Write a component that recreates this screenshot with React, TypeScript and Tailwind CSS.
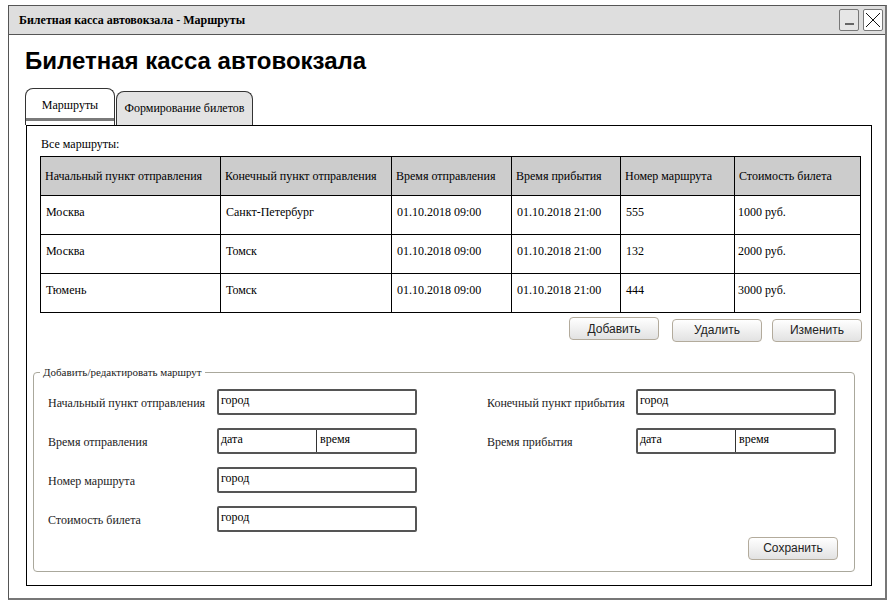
import React from "react";

type Route = { from: string; to: string; dep: string; arr: string; num: string; price: string };

const routes: Route[] = [
  { from: "Москва", to: "Санкт-Петербург", dep: "01.10.2018 09:00", arr: "01.10.2018 21:00", num: "555", price: "1000 руб." },
  { from: "Москва", to: "Томск", dep: "01.10.2018 09:00", arr: "01.10.2018 21:00", num: "132", price: "2000 руб." },
  { from: "Тюмень", to: "Томск", dep: "01.10.2018 09:00", arr: "01.10.2018 21:00", num: "444", price: "3000 руб." },
];

const headers = [
  "Начальный пункт отправления",
  "Конечный пункт отправления",
  "Время отправления",
  "Время прибытия",
  "Номер маршрута",
  "Стоимость билета",
];
const widths = ["w-[180px]", "w-[171px]", "w-[120px]", "w-[109px]", "w-[114px]", "w-[126px]"];

const serif = "font-['Liberation_Serif',serif]";
const sans = "font-['Liberation_Sans',Arial,sans-serif]";

function Btn({ children }: { children: React.ReactNode }) {
  return (
    <button
      className={`${sans} h-[23px] w-[90px] rounded-[4px] border border-[#b3ab9c] bg-linear-to-b from-white to-[#e2e2e2] text-[12px] text-[#222]`}
    >
      {children}
    </button>
  );
}

function Field({ text }: { text: string }) {
  return (
    <div className="h-[26px] w-[200px] rounded-[2px] border-2 border-[#555] bg-white pl-[2px] pt-[1px] text-[12px] leading-[16px]">
      {text}
    </div>
  );
}

function DateTime() {
  return (
    <div className="flex h-[26px] w-[200px] rounded-[2px] border-2 border-[#555] bg-white text-[12px] leading-[16px]">
      <div className="w-[98px] border-r border-[#333] pl-[2px] pt-[1px]">дата</div>
      <div className="flex-1 pl-[3px] pt-[1px]">время</div>
    </div>
  );
}

function Row({ label, labelW, children }: { label: string; labelW: string; children: React.ReactNode }) {
  return (
    <div className="flex h-[26px] items-center">
      <div className={`${labelW} pt-[2px] text-[12px] text-[#222]`}>{label}</div>
      {children}
    </div>
  );
}

export default function App() {
  return (
    <div className={`${serif} h-[608px] w-[894px] bg-white pl-[8px] pt-[5px] text-black`}>
      <div className="h-[595px] w-[879px] border border-r-2 border-b-2 border-[#555] border-r-[#777] border-b-[#777]">
        {/* title bar */}
        <div className="flex h-[29px] items-center justify-between border-b border-[#555] bg-[#dedede] pl-[10px] pr-[2px]">
          <span className="text-[12px] font-bold">Билетная касса автовокзала - Маршруты</span>
          <div className="flex gap-[4px]">
            <div className="relative h-[22px] w-[20px] rounded-[2px] border border-[#777] bg-[#e6e6e6]">
              <div className="absolute bottom-[5px] left-[5px] h-[2px] w-[9px] bg-[#666]" />
            </div>
            <div className="h-[22px] w-[20px] rounded-[2px] border border-[#777] bg-white">
              <svg width="18" height="20" viewBox="0 0 18 20">
                <path d="M2 3 L16 17 M16 3 L2 17" stroke="#111" strokeWidth="1" />
              </svg>
            </div>
          </div>
        </div>

        <div className="pl-[16px]">
          <h1 className={`${sans} mt-[12px] text-[24px] font-bold leading-[28px]`}>Билетная касса автовокзала</h1>

          {/* tabs */}
          <div className="mt-[13px] flex items-end gap-[1px]">
            <div className="flex h-[37px] w-[90px] flex-col rounded-t-[8px] border border-b-0 border-[#333] bg-white">
              <div className="flex-1 pt-[7px] text-center text-[12px]">Маршруты</div>
              <div className="h-[3px] bg-[#7a7a7a]" />
              <div className="h-[4px]" />
            </div>
            <div className="h-[34px] w-[137px] rounded-t-[8px] border border-b-0 border-[#333] bg-[#e3e3e3] pt-[7px] text-center text-[12px]">
              Формирование билетов
            </div>
          </div>

          {/* panel */}
          <div className="ml-[1px] h-[461px] w-[846px] border border-black">
            <div className="pl-[14px] pt-[10px] text-[12px] leading-[16px]">Все маршруты:</div>
            <table className="ml-[13px] mt-[4px] w-[820px] table-fixed border-collapse text-[12px] leading-[16px]">
              <thead>
                <tr className="h-[39px] bg-[#cccccc]">
                  {headers.map((h, i) => (
                    <th key={h} className={`${widths[i]} border border-black pl-[4px] text-left align-middle font-normal`}>
                      {h}
                    </th>
                  ))}
                </tr>
              </thead>
              <tbody>
                {routes.map((r) => (
                  <tr key={r.num} className="h-[39px]">
                    {[r.from, r.to, r.dep, r.arr, r.num, r.price].map((v, i) => (
                      <td key={i} className={`border border-black ${i === 5 ? "pl-[3px]" : "pl-[5px]"} pt-[8px] align-top`}>
                        {v}
                      </td>
                    ))}
                  </tr>
                ))}
              </tbody>
            </table>

            <div className="mr-[9px] mt-[4px] flex justify-end">
              <Btn>Добавить</Btn>
              <div className="ml-[13px]">
                <Btn>Удалить</Btn>
              </div>
              <div className="ml-[10px]">
                <Btn>Изменить</Btn>
              </div>
            </div>

            <fieldset className="ml-[6px] mt-[24px] h-[206px] w-[822px] rounded-[4px] border border-[#aaa89c] pl-[14px] pr-[16px]">
              <legend className="-ml-[8px] px-[3px] text-[11px] leading-[13px] text-[#222]">
                Добавить/редактировать маршрут
              </legend>
              <div className="flex pt-[10px]">
                <div className="flex flex-col gap-[13px]">
                  <Row label="Начальный пункт отправления" labelW="w-[169px]">
                    <Field text="город" />
                  </Row>
                  <Row label="Время отправления" labelW="w-[169px]">
                    <DateTime />
                  </Row>
                  <Row label="Номер маршрута" labelW="w-[169px]">
                    <Field text="город" />
                  </Row>
                  <Row label="Стоимость билета" labelW="w-[169px]">
                    <Field text="город" />
                  </Row>
                </div>
                <div className="ml-[70px] flex flex-col gap-[13px]">
                  <Row label="Конечный пункт прибытия" labelW="w-[149px]">
                    <Field text="город" />
                  </Row>
                  <Row label="Время прибытия" labelW="w-[149px]">
                    <DateTime />
                  </Row>
                </div>
              </div>
              <div className="mt-[5px] flex justify-end">
                <Btn>Сохранить</Btn>
              </div>
            </fieldset>
          </div>
        </div>
      </div>
    </div>
  );
}
